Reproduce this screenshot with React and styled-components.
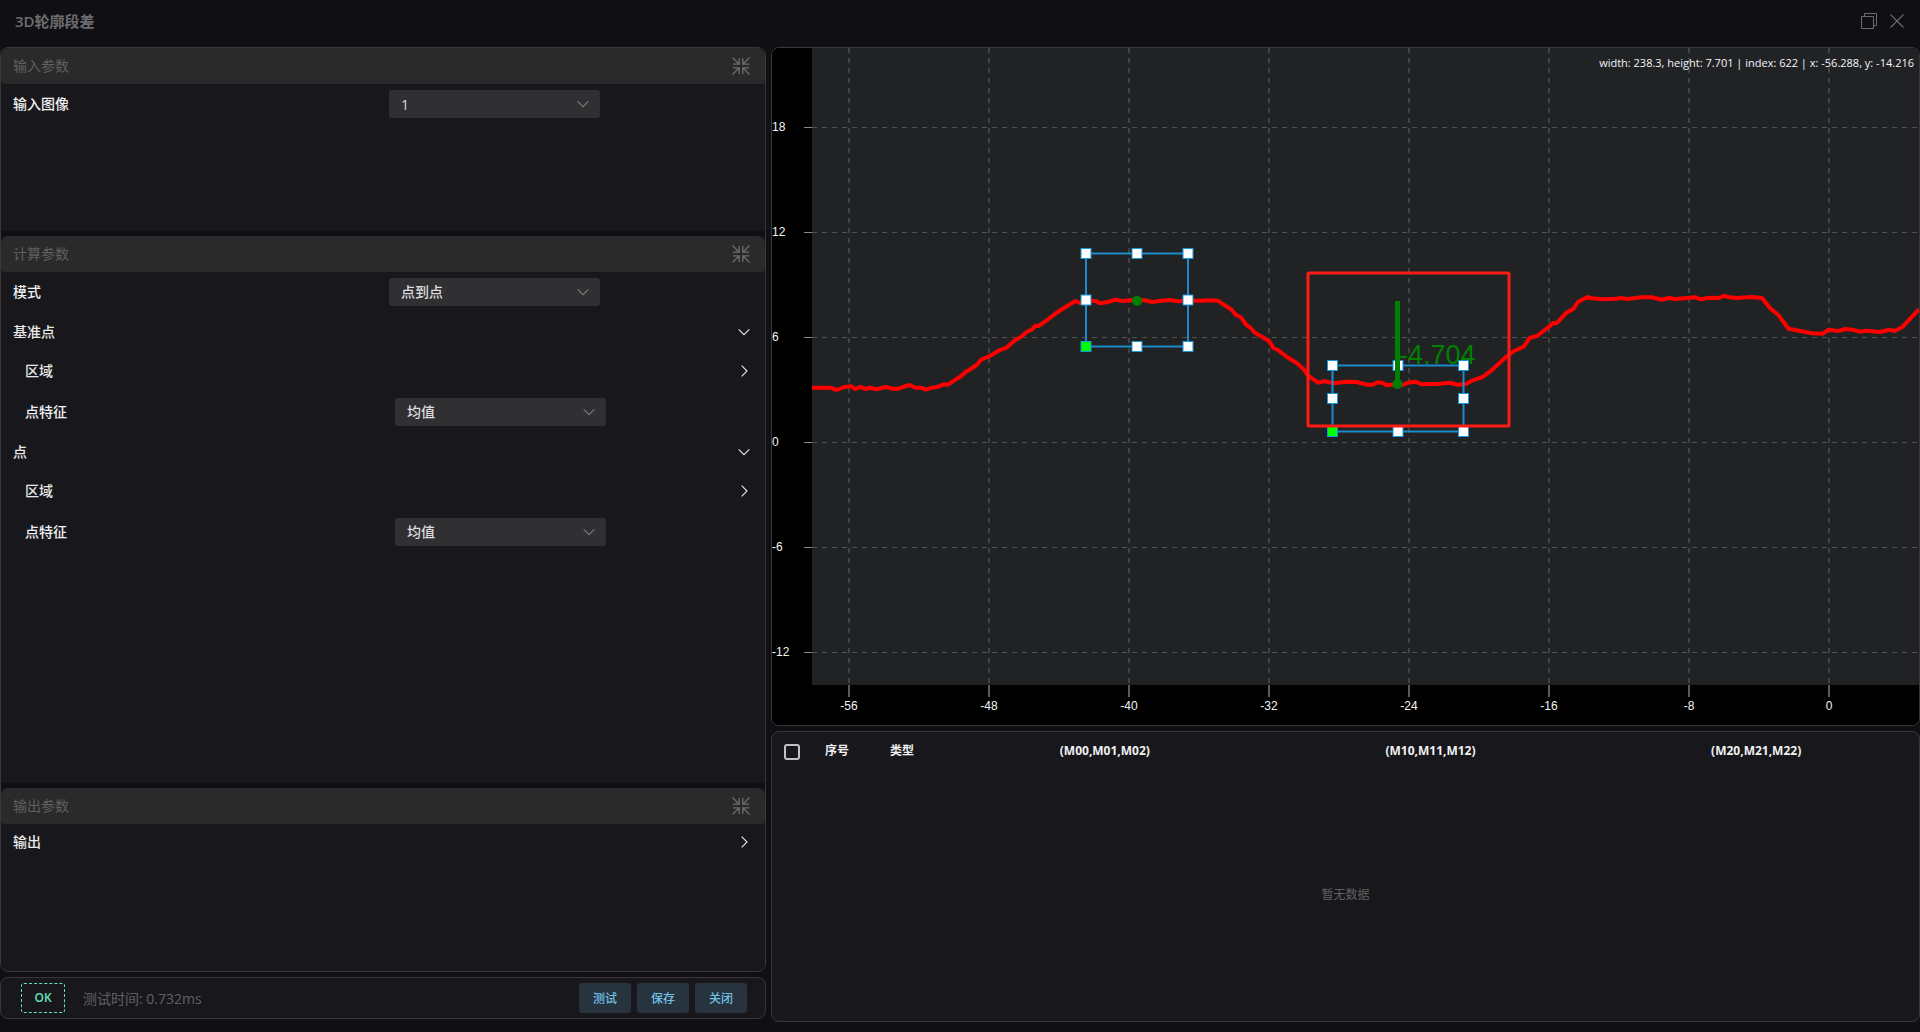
import { useState } from 'react';
import styled, { createGlobalStyle } from 'styled-components';

const PROFILE = [
    [40, 339.7], [49, 339.7], [58.3, 339.7], [64.6, 342], [72.3, 339], [79.4, 338.3], [83.4, 341], [87.9, 339],
    [94.2, 341], [97.9, 339.7], [104.5, 341.3], [113.8, 339], [120.4, 340.7], [126.7, 340.7], [133, 338.3],
    [137.8, 337], [143.4, 339.7], [148.9, 339.7], [153.7, 341.7], [160, 339.7], [166.3, 338.7], [171.8, 336.3],
    [175.9, 336.7], [180.4, 333.7], [189.6, 327.7], [193.3, 324.3], [204.4, 317.3], [209.2, 311.7], [216.6, 308.7],
    [226.6, 302.7], [235.1, 299.3], [243.2, 292], [248.8, 289], [255.1, 283.7], [259.9, 281.7], [263.2, 277.7],
    [266.5, 278], [274.7, 272.3], [283.9, 265.3], [293.2, 259.3], [303.5, 253], [308, 255], [313.9, 252.7],
    [323.9, 253], [327.6, 255.3], [337.6, 253.7], [343.1, 251.7], [350.5, 253], [357.9, 252.3], [372.7, 252.3],
    [380.1, 254], [389.4, 252.7], [397.9, 252], [406, 253.3], [416, 252.7], [428.2, 252.7], [437.4, 252.3],
    [445.9, 252.7], [451.1, 256.3], [459.6, 261.7], [464, 267], [468.9, 269.3], [474.4, 277], [478.5, 279.7],
    [482.9, 284.7], [488.1, 287.7], [497, 293], [501.4, 300], [505.9, 302], [515.1, 309], [524, 314.5],
    [531.3, 320.7], [536, 327.7], [546, 334.7], [552.3, 333.3], [562.3, 335.3], [574, 333.7], [584, 334],
    [595.7, 336.7], [600.7, 336.7], [605.7, 334.3], [610.7, 335], [614.7, 337.3], [625.7, 336], [630.7, 337],
    [635.7, 334.7], [643.3, 333.7], [650, 336.3], [657.3, 336], [667.3, 335.7], [678, 334.7], [685.7, 336.7],
    [694, 336], [700.7, 332.3], [710.7, 329], [720.7, 321.3], [734, 309], [742, 303], [751.8, 298.7],
    [757.9, 289.7], [765.1, 288], [777.1, 278.7], [781.2, 275], [784.4, 275.3], [794.4, 264.7], [801.6, 260.7],
    [806, 254], [815.7, 249], [819.3, 250.3], [831.4, 251.3], [843.4, 250.7], [849, 250], [855.5, 251],
    [869.5, 249.3], [879.6, 249.3], [889.6, 251.7], [896.5, 250], [903.7, 251], [923.8, 249.3], [927.8, 251.3],
    [937.8, 249.7], [947.1, 250], [951.9, 247.7], [955.9, 249], [964.8, 250], [980, 249], [990, 250],
    [998.1, 260.3], [1006.1, 266.7], [1016.6, 280.7], [1032.3, 283.7], [1039.5, 285.3], [1051.1, 285.7],
    [1056.4, 281.7], [1066.4, 283], [1073.2, 281], [1080.5, 281.7], [1087.3, 283.7], [1094.5, 282.7],
    [1107.8, 284], [1117.4, 281.7], [1122.7, 283], [1130.7, 278.7], [1147, 261.3],
];

const X_TICKS = [-56, -48, -40, -32, -24, -16, -8, 0];
const Y_TICKS = [18, 12, 6, 0, -6, -12];
const MATRIX_COLUMNS = ['(M00,M01,M02)', '(M10,M11,M12)', '(M20,M21,M22)'];

const xOf = (value) => 1057 + value * 17.5;
const yOf = (value) => 394.5 - value * 17.5;

const CollapseIcon = () => (
    <svg width="18" height="18" viewBox="0 0 18 18" fill="none" stroke="currentColor" strokeWidth="1.3">
        <path d="M.5.5 7 7M7.2 1v6.2H1M17.5.5 11 7M10.8 1v6.2H17M.5 17.5 7 11M7.2 17v-6.2H1M17.5 17.5 11 11M10.8 17v-6.2H17" />
    </svg>
);

const ArrowIcon = ({ open, size = 12 }) => (
    <svg width={size} height={size} viewBox="0 0 12 12" fill="none" stroke="currentColor" strokeWidth="1.1">
        <path d={open ? 'M.7 3.3 6 8.7l5.3-5.4' : 'M3.7.7 9 6l-5.3 5.3'} />
    </svg>
);

const RestoreIcon = () => (
    <svg width="16" height="16" viewBox="0 0 16 16" fill="none" stroke="currentColor">
        <path d="M.5 3.5h12v12H.5zM3.5 3.5v-3h12v12h-3" />
    </svg>
);

const CloseIcon = () => (
    <svg width="16" height="16" viewBox="0 0 16 16" fill="none" stroke="currentColor" strokeWidth="1.1">
        <path d="M1.5 1.5l13 13M14.5 1.5l-13 13" />
    </svg>
);

const Section = ({ title, grow, children }) => (
    <SectionBox $grow={grow}>
        <SectionHeader>
            <SectionTitle>{title}</SectionTitle>
            <IconButton type="button" aria-label={`收起${title}`}><CollapseIcon /></IconButton>
        </SectionHeader>
        <SectionBody>{children}</SectionBody>
    </SectionBox>
);

const SelectField = ({ id, label, options }) => {
    const [value, setValue] = useState(options[0]);
    return (
        <Field>
            <FieldLabel htmlFor={id}>{label}</FieldLabel>
            <FieldControl>
                <SelectWrap>
                    <Select id={id} value={value} onChange={(e) => setValue(e.target.value)}>
                        {options.map((o) => <option key={o}>{o}</option>)}
                    </Select>
                    <SelectArrow><ArrowIcon open /></SelectArrow>
                </SelectWrap>
            </FieldControl>
        </Field>
    );
};

const TreeItem = ({ label, defaultOpen = false, children }) => {
    const [open, setOpen] = useState(defaultOpen);
    return (
        <div>
            <TreeHeader type="button" aria-expanded={open} onClick={() => setOpen(!open)}>
                <TreeLabel>{label}</TreeLabel>
                <ArrowIcon open={open} />
            </TreeHeader>
            {open && children && <TreeChildren>{children}</TreeChildren>}
        </div>
    );
};

const Region = ({ x, y, width, height }) => (
    <g stroke="#1a96dc">
        <rect x={x} y={y} width={width} height={height} fill="none" strokeWidth="2" strokeOpacity=".9" />
        {[0, 0.5, 1].map((row) => [0, 0.5, 1].map((col) => (
            row === 0.5 && col === 0.5 ? null : (
                <rect
                    key={`${row}-${col}`}
                    x={x + width * col - 5}
                    y={y + height * row - 5}
                    width="10"
                    height="10"
                    fill={row === 1 && col === 0 ? '#00ff00' : '#ffffff'}
                />
            )
        )))}
    </g>
);

const ProfileChart = () => (
    <ChartSvg viewBox="0 0 1147 677" preserveAspectRatio="xMinYMin meet">
        <rect width="1147" height="677" fill="#000000" />
        <rect x="40" width="1107" height="637" fill="#212224" />
        {X_TICKS.map((t) => (
            <g key={t}>
                <path d={`M${xOf(t)} 0V637`} stroke="#414244" strokeWidth="2" strokeDasharray="5 5" />
                <path d={`M${xOf(t)} 637v12`} stroke="#5a5a5a" strokeWidth="2" />
                <AxisText x={xOf(t)} y="662" textAnchor="middle">{t}</AxisText>
            </g>
        ))}
        {Y_TICKS.map((t) => (
            <g key={t}>
                <path d={`M40 ${yOf(t)}H1147`} stroke="#505153" strokeDasharray="5 5" />
                <path d={`M32 ${yOf(t)}h8`} stroke="#8a8a8a" />
                <AxisText x="0" y={yOf(t) + 3.5}>{t}</AxisText>
            </g>
        ))}
        <polyline points={PROFILE.join(' ')} fill="none" stroke="#ff0000" strokeWidth="4" strokeLinejoin="round" />
        <HeightText x="627" y="316">-4.704</HeightText>
        <Region x={314} y={205.5} width={102} height={93} />
        <Region x={560.5} y={317.5} width={131} height={66} />
        <circle cx="365" cy="253" r="5" fill="#008000" />
        <path d="M625.5 253v83" stroke="#008000" strokeWidth="5" />
        <circle cx="625.5" cy="336" r="5" fill="#008000" />
        <rect x="536" y="225" width="201" height="153" rx="1" fill="none" stroke="#fc1c14" strokeWidth="3" />
    </ChartSvg>
);

const App = () => (
    <>
        <GlobalStyle />
        <Page>
            <TitleBar>
                <Title>3D轮廓段差</Title>
                <WindowButtons>
                    <IconButton type="button" aria-label="还原"><RestoreIcon /></IconButton>
                    <IconButton type="button" aria-label="关闭窗口"><CloseIcon /></IconButton>
                </WindowButtons>
            </TitleBar>
            <Main>
                <LeftColumn>
                    <ParamPanel>
                        <Section title="输入参数" grow={1}>
                            <SelectField id="image" label="输入图像" options={['1', '2']} />
                        </Section>
                        <Section title="计算参数" grow={3}>
                            <SelectField id="mode" label="模式" options={['点到点', '点到线']} />
                            <TreeItem label="基准点" defaultOpen>
                                <TreeItem label="区域" />
                                <SelectField id="base-feature" label="点特征" options={['均值', '最大值', '最小值']} />
                            </TreeItem>
                            <TreeItem label="点" defaultOpen>
                                <TreeItem label="区域" />
                                <SelectField id="point-feature" label="点特征" options={['均值', '最大值', '最小值']} />
                            </TreeItem>
                        </Section>
                        <Section title="输出参数" grow={1}>
                            <TreeItem label="输出" />
                        </Section>
                    </ParamPanel>
                    <Footer>
                        <Status>OK</Status>
                        <TestTime>测试时间: 0.732ms</TestTime>
                        <ActionButton type="button">测试</ActionButton>
                        <ActionButton type="button">保存</ActionButton>
                        <ActionButton type="button">关闭</ActionButton>
                    </Footer>
                </LeftColumn>
                <RightColumn>
                    <ChartPanel>
                        <ProfileChart />
                        <ChartInfo>width: 238.3, height: 7.701 | index: 622 | x: -56.288, y: -14.216</ChartInfo>
                    </ChartPanel>
                    <TablePanel>
                        <Table>
                            <thead>
                                <tr>
                                    <Th $width={40}><Checkbox type="checkbox" aria-label="全选" /></Th>
                                    <Th $width={50}>序号</Th>
                                    <Th $width={80}>类型</Th>
                                    {MATRIX_COLUMNS.map((c) => <Th key={c}>{c}</Th>)}
                                </tr>
                            </thead>
                        </Table>
                        <Empty>暂无数据</Empty>
                    </TablePanel>
                </RightColumn>
            </Main>
        </Page>
    </>
);

const GlobalStyle = createGlobalStyle`
    * {
        box-sizing: border-box;
    }
    body {
        margin: 0;
        background: #101014;
    }
    body, button, select {
        font-family: "Open Sans", "Noto Sans CJK SC", sans-serif;
    }
`;

const Page = styled.div`
    display: flex;
    flex-direction: column;
    height: 100vh;
    padding-bottom: 10px;
    color: #f0f0f1;
    font-size: 14px;
`;
const TitleBar = styled.header`
    display: flex;
    align-items: center;
    justify-content: space-between;
    height: 47px;
    padding: 0 15px 6px;
    color: #6c6c6e;
`;
const Title = styled.h1`
    margin: 0;
    font-size: 15px;
    line-height: 20px;
    font-weight: 600;
`;
const WindowButtons = styled.div`
    display: flex;
    gap: 12px;
`;
const IconButton = styled.button`
    display: flex;
    padding: 0;
    border: none;
    background: none;
    color: #6c6c6e;
`;
const Main = styled.main`
    flex: 1;
    min-height: 0;
    display: grid;
    grid-template-columns: 2fr 3fr;
    gap: 5px;
`;
const LeftColumn = styled.div`
    display: flex;
    flex-direction: column;
    gap: 5px;
    min-height: 0;
    padding-bottom: 3px;
`;
const Panel = styled.div`
    border: 1px solid #38383b;
    border-radius: 8px;
    background: #18181c;
    overflow: hidden;
`;
const ParamPanel = styled(Panel)`
    flex: 1;
    display: flex;
    flex-direction: column;
    gap: 5px;
    background: #101014;
`;
const SectionBox = styled.section`
    flex: ${({ $grow }) => $grow} 1 0;
    background: #18181c;
`;
const SectionHeader = styled.div`
    display: flex;
    align-items: center;
    justify-content: space-between;
    height: 36px;
    padding: 0 15px 0 12px;
    border-radius: 8px 8px 4px 4px;
    background: #2a2a2a;
`;
const SectionTitle = styled.h2`
    margin: 0;
    padding-bottom: 2px;
    color: #606062;
    font-size: 14px;
    font-weight: 400;
`;
const SectionBody = styled.div`
    padding-left: 12px;
`;
const Field = styled.div`
    display: flex;
    align-items: center;
    height: 28px;
    margin: 6px 0 8px;
`;
const FieldLabel = styled.label`
    flex: 1;
    padding-bottom: 2px;
    font-weight: 500;
`;
const FieldControl = styled.div`
    flex: 1;
`;
const SelectWrap = styled.div`
    position: relative;
    width: 211px;
`;
const Select = styled.select`
    display: block;
    width: 100%;
    height: 28px;
    padding: 0 32px 0 12px;
    border: none;
    border-radius: 3px;
    background: #303033;
    color: #dcdcdd;
    font-size: 14px;
    font-weight: 500;
    appearance: none;
`;
const SelectArrow = styled.span`
    position: absolute;
    top: 8px;
    right: 11px;
    display: flex;
    color: #7c7c7e;
    pointer-events: none;
`;
const TreeHeader = styled.button`
    display: flex;
    align-items: center;
    justify-content: space-between;
    width: 100%;
    height: 36px;
    padding: 0 15px 0 0;
    border: none;
    background: none;
    color: #e8e8e9;
    font-size: 14px;
    font-weight: 500;
`;
const TreeLabel = styled.span`
    padding-bottom: 2px;
`;
const TreeChildren = styled.div`
    display: grid;
    gap: 3px;
    padding: 3px 0 0 12px;
`;
const Footer = styled(Panel)`
    display: flex;
    align-items: center;
    gap: 6px;
    height: 42px;
    padding: 0 18px 0 20px;
`;
const Status = styled.span`
    width: 44px;
    height: 30px;
    border: 1px dashed #63e2b7;
    border-radius: 3px;
    color: #63e2b7;
    font-size: 12px;
    font-weight: 600;
    line-height: 28px;
    text-align: center;
`;
const TestTime = styled.span`
    flex: 1;
    padding-left: 12px;
    color: #606062;
`;
const ActionButton = styled.button`
    width: 52px;
    height: 30px;
    padding: 0;
    border: none;
    border-radius: 3px;
    background: #27343d;
    color: #70c0e8;
    font-size: 12px;
    font-weight: 500;
`;
const RightColumn = styled.div`
    display: grid;
    grid-template-rows: minmax(0, 7fr) minmax(0, 3fr);
    gap: 5px;
    min-width: 0;
    min-height: 0;
`;
const ChartPanel = styled(Panel)`
    position: relative;
    background: #000000;
`;
const ChartSvg = styled.svg`
    display: block;
    width: 100%;
    height: 100%;
`;
const AxisText = styled.text`
    fill: #f4f4f4;
    font-family: "Liberation Sans", Arial, sans-serif;
    font-size: 12px;
`;
const HeightText = styled.text`
    fill: #008000;
    font-family: "Liberation Sans", Arial, sans-serif;
    font-size: 27px;
`;
const ChartInfo = styled.div`
    position: absolute;
    top: 6px;
    right: 5px;
    color: #f4f6fa;
    font-size: 11px;
    font-weight: 500;
    line-height: 18px;
`;
const TablePanel = styled(Panel)`
    display: flex;
    flex-direction: column;
`;
const Table = styled.table`
    width: 100%;
    border-collapse: collapse;
    table-layout: fixed;
`;
const Th = styled.th`
    width: ${({ $width }) => ($width ? `${$width}px` : 'auto')};
    height: 36px;
    padding: 0;
    font-size: 12px;
    font-weight: 700;
`;
const Checkbox = styled.input`
    display: block;
    width: 16px;
    height: 16px;
    margin: 4px auto 0;
    border: 2px solid #c2c2c6;
    border-radius: 3px;
    background: transparent;
    appearance: none;
`;
const Empty = styled.div`
    flex: 1;
    display: flex;
    align-items: center;
    justify-content: center;
    padding-bottom: 2px;
    color: #606062;
    font-size: 12px;
`;

export default App;
